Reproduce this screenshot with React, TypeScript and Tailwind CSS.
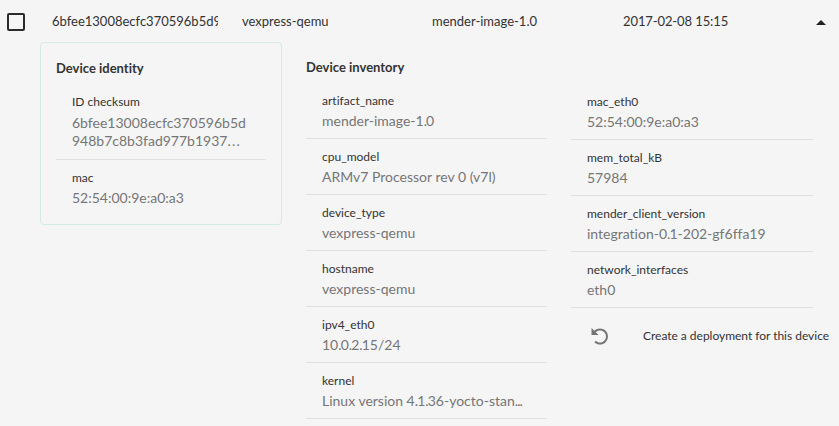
import { Fragment } from "react";

// Sets full stops and ellipses with their own spacing.
function Value({ text }: { text: string }) {
  return (
    <>
      {text.split(/(\.+|…)/).map((part, i) => (
        <Fragment key={i}>
          {part.startsWith(".") ? (
            <span className="tracking-[-0.9px]">{part}</span>
          ) : part === "…" ? (
            <span className="tracking-[1.2px]">...</span>
          ) : (
            part
          )}
        </Fragment>
      ))}
    </>
  );
}

function Item({ k, v }: { k: string; v: string }) {
  return (
    <div className="h-14 whitespace-nowrap border-b border-[#e0e0e0] pl-4 pt-[9px]">
      <div className="text-[12px] leading-[18px] text-[#333]">{k}</div>
      <div className="mt-px text-[14px] leading-[19px] text-[#767676]">
        <Value text={v} />
      </div>
    </div>
  );
}

export default function App() {
  return (
    <div className="h-[426px] w-[839px] overflow-hidden bg-[#f5f5f5] font-['Lato',sans-serif] text-[#333] [font-variant-ligatures:none]">
      <div className="flex h-[42px] items-center whitespace-nowrap pt-[2px] text-[13px]">
        <div className="ml-[7px] size-[18px] rounded-[2px] border-2 border-[#2b2b2b]" />
        <div className="ml-[27px] w-[166px] overflow-hidden">6bfee13008ecfc370596b5d9</div>
        <div className="ml-6 w-[190px]">vexpress-qemu</div>
        <div className="w-[191px]">mender-image-1.0</div>
        <div className="w-[193px] tracking-[-0.1px]">2017-02-08 15:15</div>
        <svg className="shrink-0" width="10" height="5" viewBox="0 0 10 5"><path d="M0 5L5 0L10 5Z" fill="#222" /></svg>
      </div>
      <div className="flex items-start">
        <section className="ml-10 h-[183px] w-[242px] rounded border border-[#d3ebe5] px-[15px] pt-[15px]">
          <h2 className="text-[13px] font-bold leading-5">Device identity</h2>
          <div className="mt-[6px] h-[76px] whitespace-nowrap border-b border-[#e0e0e0] pl-4 pt-[9px]">
            <div className="text-[12px] leading-[18px]">ID checksum</div>
            <div className="mt-[3px] text-[14px] leading-[18px] text-[#767676]">
              <div>6bfee13008ecfc370596b5d</div>
              <div><Value text="948b7c8b3fad977b1937…" /></div>
            </div>
          </div>
          <div className="pl-4 pt-[9px]">
            <div className="text-[12px] leading-[18px]">mac</div>
            <div className="mt-px text-[14px] leading-[19px] text-[#767676]">52:54:00:9e:a0:a3</div>
          </div>
        </section>
        <section className="ml-6 pt-[15px]">
          <h2 className="text-[13px] font-bold leading-5">Device inventory</h2>
          <div className="flex gap-6 pt-[6px]">
            <div className="w-[241px] shrink-0">
              <Item k="artifact_name" v="mender-image-1.0" />
              <Item k="cpu_model" v="ARMv7 Processor rev 0 (v7l)" />
              <Item k="device_type" v="vexpress-qemu" />
              <Item k="hostname" v="vexpress-qemu" />
              <Item k="ipv4_eth0" v="10.0.2.15/24" />
              <Item k="kernel" v="Linux version 4.1.36-yocto-stan..." />
            </div>
            <div className="w-[242px] shrink-0 pt-px">
              <Item k="mac_eth0" v="52:54:00:9e:a0:a3" />
              <Item k="mem_total_kB" v="57984" />
              <Item k="mender_client_version" v="integration-0.1-202-gf6ffa19" />
              <Item k="network_interfaces" v="eth0" />
              <div className="flex items-center whitespace-nowrap pl-[17px] pt-4 text-[12px]">
                <svg className="shrink-0" width="24" height="24" viewBox="0 0 24 24" fill="#757575">
                  <path transform="translate(0 -0.5) rotate(-45 12 13)" d="M12 5V1L7 6l5 5V7c3.31 0 6 2.69 6 6s-2.69 6-6 6-6-2.69-6-6H4c0 4.42 3.58 8 8 8s8-3.58 8-8-3.58-8-8-8z" />
                </svg>
                <span className="ml-[31px] tracking-[-0.02px]">Create a deployment for this device</span>
              </div>
            </div>
          </div>
        </section>
      </div>
    </div>
  );
}
